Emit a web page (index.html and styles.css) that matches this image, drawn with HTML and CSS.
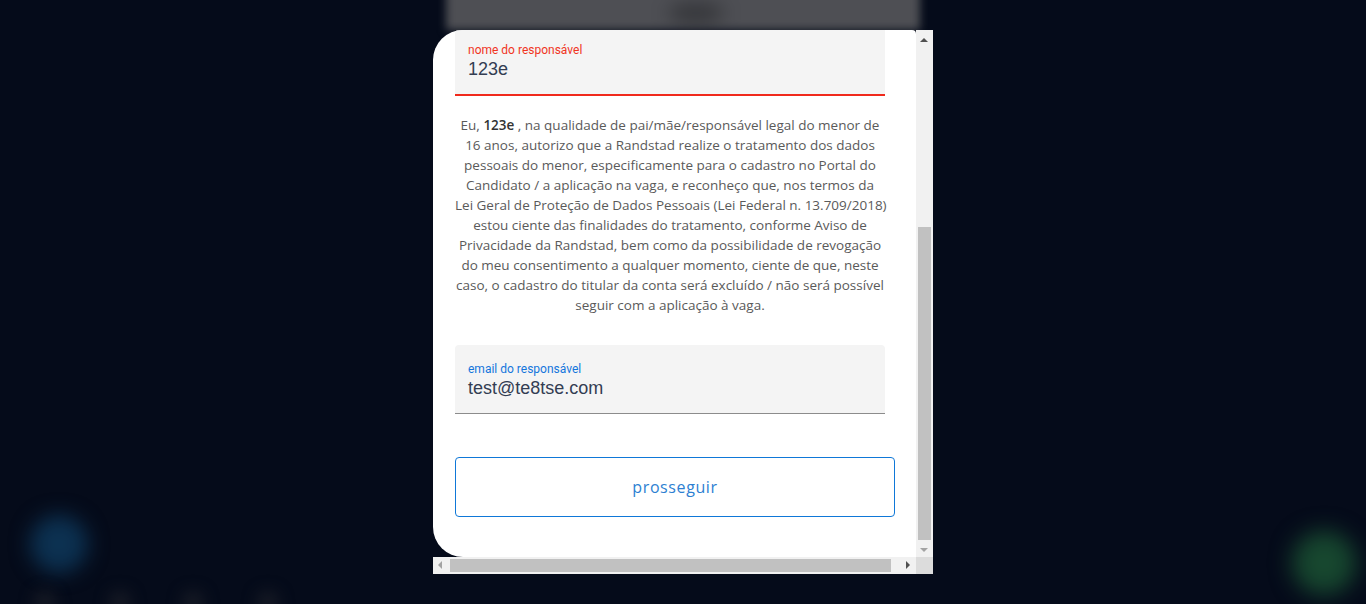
FILE: index.html
```html
<!DOCTYPE html>
<html lang="pt-BR">
<head>
<meta charset="utf-8">
<title>Consentimento</title>
<link rel="stylesheet" href="styles.css">
</head>
<body>
<div class="backdrop">
  <div class="bg-card"><div class="bg-blob"></div></div>
  <div class="bg-blue"></div>
  <div class="bg-green"></div>
  <div class="bg-dots"><span></span><span></span><span></span><span></span></div>
</div>
<div class="stage">
  <div class="modal">
    <div class="viewport">
      <div class="content">
        <div class="field field-error">
          <label class="field-label">nome do responsável</label>
          <div class="field-value">123e</div>
        </div>
        <p class="consent">Eu, <strong>123e</strong> , na qualidade de pai/mãe/responsável legal do menor de<br>16 anos, autorizo que a Randstad realize o tratamento dos dados<br>pessoais do menor, especificamente para o cadastro no Portal do<br>Candidato / a aplicação na vaga, e reconheço que, nos termos da<br>Lei Geral de Proteção de Dados Pessoais (Lei Federal n. 13.709/2018)<br>estou ciente das finalidades do tratamento, conforme Aviso de<br>Privacidade da Randstad, bem como da possibilidade de revogação<br>do meu consentimento a qualquer momento, ciente de que, neste<br>caso, o cadastro do titular da conta será excluído / não será possível<br>seguir com a aplicação à vaga.</p>
        <div class="field field-ok">
          <label class="field-label">email do responsável</label>
          <div class="field-value">test@te8tse.com</div>
        </div>
        <button class="btn">prosseguir</button>
      </div>
    </div>
    <div class="vscroll">
      <div class="arrow up"></div>
      <div class="vtrack"><div class="vthumb"></div></div>
      <div class="arrow down"></div>
    </div>
    <div class="hscroll">
      <div class="arrow left"></div>
      <div class="htrack"><div class="hthumb"></div></div>
      <div class="arrow right"></div>
    </div>
    <div class="corner"></div>
  </div>
</div>
</body>
</html>
```
FILE: styles.css
```css
* { box-sizing: border-box; }
html, body { margin: 0; padding: 0; }
body {
  width: 1366px;
  height: 604px;
  overflow: hidden;
  background: #050b1a;
  font-family: "Liberation Sans", Arial, sans-serif;
  position: relative;
}
.backdrop { position: absolute; inset: 0; }
.bg-card {
  position: absolute; left: 446px; top: -20px; width: 474px; height: 50px;
  background: #4e4f54; filter: blur(4px);
}
.bg-blob {
  position: absolute; left: 222px; top: 22px; width: 56px; height: 22px;
  border-radius: 50%; background: #36373b; filter: blur(8px);
}
.bg-blue {
  position: absolute; left: 30px; top: 515px; width: 58px; height: 58px;
  border-radius: 50%; background: #0c3151; filter: blur(10px);
}
.bg-green {
  position: absolute; left: 1292px; top: 531px; width: 64px; height: 64px;
  border-radius: 50%; background: #17472f; filter: blur(11px);
}
.bg-dots span {
  position: absolute; top: 590px; width: 24px; height: 24px; border-radius: 50%;
  background: #141823; filter: blur(7px);
}
.bg-dots span:nth-child(1) { left: 33px; }
.bg-dots span:nth-child(2) { left: 108px; }
.bg-dots span:nth-child(3) { left: 181px; }
.bg-dots span:nth-child(4) { left: 256px; }

.stage {
  position: relative;
  padding: 30px 0 0 433px;
}
.modal {
  width: 500px;
  height: 544px;
  display: grid;
  grid-template-columns: 483px 17px;
  grid-template-rows: 527px 17px;
}
.viewport {
  background: #fff;
  border-radius: 30px 4px 0 30px;
  overflow: hidden;
}
.content {
  margin-top: -4px;
  padding: 0 31px 0 22px;
  display: flex;
  flex-direction: column;
}
.field {
  width: 430px;
  height: 70px;
  background: #f4f4f4;
  border-radius: 4px 4px 0 0;
  padding: 17px 13px 0;
}
.field-error { border-bottom: 2px solid #f02a1c; }
.field-ok { height: 69px; border-bottom: 1px solid #8c8c8c; margin-top: 30px; }
.field-label {
  display: block;
  font-family: Roboto, "Liberation Sans", sans-serif;
  font-size: 12px;
  line-height: 14px;
  color: #f0341f;
}
.field-ok .field-label { color: #1476dc; }
.field-value {
  font-family: "Liberation Sans", Arial, sans-serif;
  font-size: 18px;
  line-height: 22px;
  color: #333d52;
  margin-top: 1px;
}
.consent {
  margin: 19px 0 0;
  width: 430px;
  text-align: center;
  font-family: "Open Sans", sans-serif;
  font-size: 13.5px;
  line-height: 20px;
  color: #5a5a5a;
  white-space: nowrap;
}
.consent strong { font-weight: 600; color: #333; }
.btn {
  margin-top: 43px;
  width: 440px;
  height: 60px;
  background: #fff;
  border: 1px solid #0f78d8;
  border-radius: 4px;
  color: #2d7fd2;
  font-family: "Open Sans", sans-serif;
  font-size: 16px;
  letter-spacing: 0.6px;
  padding: 0;
}

.vscroll, .hscroll { background: #f1f1f1; display: flex; }
.vscroll { flex-direction: column; }
.arrow { width: 17px; height: 17px; flex: none; position: relative; }
.arrow::after { content: ""; position: absolute; width: 0; height: 0; border: 4px solid transparent; }
.arrow.up::after { left: 4px; top: 4px; border-bottom-color: #505050; }
.arrow.down::after { left: 4px; top: 8px; border-top-color: #a3a3a3; }
.arrow.left::after { left: 1px; top: 4px; border-right-color: #a3a3a3; }
.arrow.right::after { left: 7px; top: 4px; border-left-color: #505050; }
.vtrack { flex: 1; padding: 180px 2px 0; display: flex; }
.vthumb { flex: 1; background: #c1c1c1; }
.htrack { flex: 1; padding: 2px 0; display: flex; }
.hthumb { width: 441px; background: #c1c1c1; }
.corner { background: #dcdcdc; }
```
